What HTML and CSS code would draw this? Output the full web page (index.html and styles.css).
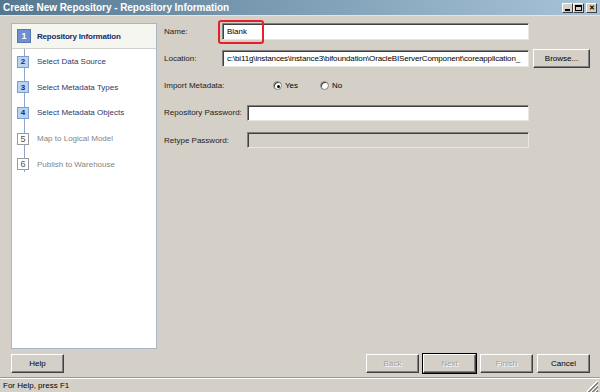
FILE: index.html
```html
<!DOCTYPE html>
<html>
<head>
<meta charset="utf-8">
<link rel="stylesheet" href="styles.css">
</head>
<body>
<div class="window">
  <div class="titlebar">
    <span class="title">Create New Repository - Repository Information</span>
    <div class="winbtns">
      <span class="wbtn wmin"><i></i></span><span class="wbtn wmax"><i></i></span><span class="wbtn wclose">&#x2715;</span>
    </div>
  </div>
  <div class="main">
    <div class="steps">
      <div class="line"></div>
      <div class="step current"><span class="num">1</span><span class="lbl">Repository Information</span></div>
      <div class="step active"><span class="num">2</span><span class="lbl">Select Data Source</span></div>
      <div class="step active"><span class="num">3</span><span class="lbl">Select Metadata Types</span></div>
      <div class="step active"><span class="num">4</span><span class="lbl">Select Metadata Objects</span></div>
      <div class="step future"><span class="num">5</span><span class="lbl">Map to Logical Model</span></div>
      <div class="step future"><span class="num">6</span><span class="lbl">Publish to Warehouse</span></div>
    </div>
    <div class="form">
      <div class="row">
        <span class="label short">Name:</span>
        <div class="field name-field"><span class="val">Blank</span><span class="highlight"></span></div>
      </div>
      <div class="row">
        <span class="label short">Location:</span>
        <div class="field"><span class="val loc">c:\bi11g\instances\instance3\bifoundation\OracleBIServerComponent\coreapplication_</span></div>
        <span class="btn browse">Browse...</span>
      </div>
      <div class="row">
        <span class="label imp">Import Metadata:</span>
        <span class="radio checked"></span><span class="rlbl">Yes</span>
        <span class="radio no"></span><span class="rlbl">No</span>
      </div>
      <div class="row">
        <span class="label long">Repository Password:</span>
        <div class="field pw"></div>
      </div>
      <div class="row">
        <span class="label long">Retype Password:</span>
        <div class="field pw disabled"></div>
      </div>
    </div>
  </div>
  <div class="footer">
    <span class="btn help">Help</span>
    <div class="navbtns">
      <span class="btn dis">Back</span>
      <span class="btn dis def">Next</span>
      <span class="btn dis">Finish</span>
      <span class="btn">Cancel</span>
    </div>
  </div>
  <div class="status">
    <span class="stext">For Help, press F1</span>
    <span class="grip"></span>
  </div>
</div>
</body>
</html>
```
FILE: styles.css
```css
* { box-sizing: border-box; }
html, body { margin: 0; padding: 0; }
body {
  width: 600px; height: 392px; overflow: hidden;
  font-family: "Liberation Sans", Arial, sans-serif;
  font-size: 8px;
  color: #000;
  background: #d4d0c8;
}
.window {
  width: 600px; height: 392px;
  display: flex; flex-direction: column;
  background: #d4d0c8;
}
.titlebar {
  height: 16px; flex: none;
  display: flex; align-items: center; justify-content: space-between;
  background: linear-gradient(to right, #557891 0%, #7a9bb2 45%, #a8c3d8 100%);
  padding: 0 3px 0 3px;
  border-bottom: 1px solid #e6e4de;
}
.title {
  color: #fff; font-weight: bold; font-size: 10px;
  font-family: "Liberation Sans", Arial, sans-serif;
  letter-spacing: -0.05px;
}
.winbtns { display: flex; align-items: center; gap: 0; }
.wbtn {
  width: 11px; height: 10px; background: #d4d0c8;
  border: 1px solid; border-color: #fff #404040 #404040 #fff;
  display: flex; align-items: center; justify-content: center;
  font-size: 7px; font-weight: bold; line-height: 1; color: #000;
}
.wclose { margin-left: 2px; }
.wmin i { display: block; width: 5px; height: 2px; background: #000; margin-top: 4px; }
.wmax i { display: block; width: 7px; height: 6px; border: 1px solid #000; border-top-width: 2px; }
.main {
  flex: 1; display: flex;
  padding: 7px 0 0 11px;
}
.steps {
  position: relative;
  width: 146px; height: 326px;
  background: #fff;
  border: 1px solid #a9b6c9;
  display: flex; flex-direction: column;
}
.line {
  position: absolute; left: 12px; top: 18px; height: 130px;
  width: 1px; background: #8ea5cb;
}
.step {
  position: relative;
  height: 25.6px; display: flex; align-items: center;
  padding-left: 5px;
}
.step.current {
  height: 25px; background: #f6f6f1; border-bottom: 1px solid #d0d0cc;
}
.num {
  width: 12px; height: 12px; flex: none;
  display: flex; align-items: center; justify-content: center;
  font-weight: bold; font-size: 8px;
  border: 1px solid #7f9cc8; background: #b9d3f3; color: #1d2b5a;
  margin-right: 8px;
}
.current .num {
  width: 14px; height: 14px; background: #6f8fd0; border-color: #5677b5; color: #fff;
  margin-right: 6px; font-size: 9px;
}
.future .num { background: #fff; border-color: #9a9a9a; color: #505050; font-weight: normal; font-size: 9px; }
.lbl { color: #2a3a6e; white-space: nowrap; }
.current .lbl { color: #1a2a66; font-weight: bold; font-size: 8px; letter-spacing: -0.2px; }
.future .lbl { color: #858585; }
.form {
  flex: 1; display: flex; flex-direction: column; gap: 9.3px;
  padding: 0 0 0 7px;
  margin-top: -1px;
}
.row { display: flex; align-items: center; height: 18px; }
.label { flex: none; color: #222; }
.label.short { width: 58px; }
.label.long { width: 83px; }
.label.imp { width: 109px; }
.field {
  position: relative;
  width: 307px; height: 17px;
  background: #fff;
  border: 1px solid; border-color: #808080 #e8e6e0 #e8e6e0 #808080;
  box-shadow: inset 1px 1px 0 #404040;
  display: flex; align-items: center;
  padding-left: 4px;
  overflow: visible;
}
.val { white-space: nowrap; }
.val.loc { letter-spacing: -0.14px; }
.field.pw { width: 282px; height: 16px; }
.field.disabled { background: #d4d0c8; }
.highlight {
  position: absolute; left: -5px; top: -4px; width: 46px; height: 24px;
  border: 2px solid #e3202b; border-radius: 3px;
}
.btn {
  display: flex; align-items: center; justify-content: center;
  width: 53px; height: 19px;
  background: #d4d0c8;
  border: 1px solid; border-color: #fff #404040 #404040 #fff;
  box-shadow: inset -1px -1px 0 #808080;
  color: #000; flex: none;
}
.browse { width: 57px; margin-left: 4px; }
.radio {
  width: 9px; height: 9px; border-radius: 50%;
  background: #fff; border: 1px solid #808080;
  box-shadow: inset 1px 1px 0 #404040;
  position: relative; flex: none;
}
.radio.checked::after {
  content: ""; position: absolute; left: 2.5px; top: 2.5px; width: 3px; height: 3px; border-radius: 50%; background: #000;
}
.rlbl { margin-left: 3px; }
.radio.no { margin-left: 22px; }
.footer {
  height: 27px; flex: none;
  display: flex; align-items: flex-start; justify-content: space-between;
  padding: 4px 10px 0 11px;
}
.navbtns { display: flex; gap: 4px; }
.btn.dis { color: #a4a09a; text-shadow: 1px 1px 0 #fff; }
.btn.def { outline: 1px solid #000; outline-offset: 0; }
.status {
  height: 15px; flex: none;
  border-top: 1px solid #9c9a94;
  box-shadow: inset 0 1px 0 #fff;
  display: flex; align-items: center; justify-content: space-between;
  padding: 1px 2px 0 3px;
}
.stext { color: #000; }
.grip {
  width: 11px; height: 11px; align-self: flex-end;
  background: linear-gradient(135deg, transparent 0 45%, #fff 45% 52%, #808080 52% 60%, transparent 60% 65%, #fff 65% 72%, #808080 72% 80%, transparent 80% 85%, #fff 85% 90%, #808080 90% 100%);
}
```
